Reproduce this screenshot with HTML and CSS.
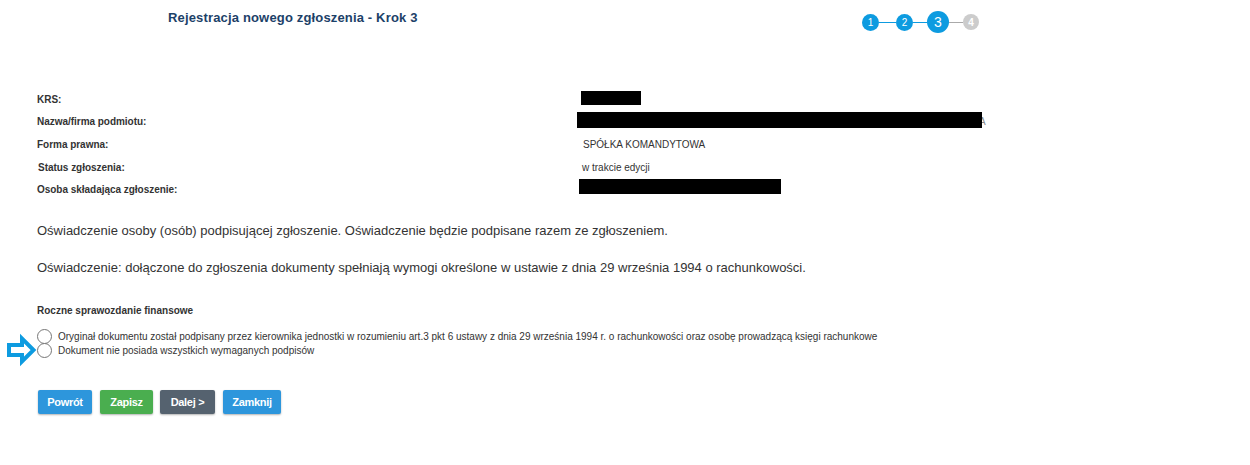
FILE: index.html
```html
<!DOCTYPE html>
<html lang="pl">
<head>
<meta charset="UTF-8"/>
<title>Rejestracja nowego zgłoszenia - Krok 3</title>
<link rel="stylesheet" href="styles.css">
</head>
<body>
<div class="header">
	<h1 class="title">Rejestracja nowego zgłoszenia - Krok 3</h1>
	<div class="steps">
		<span class="step">1</span>
		<span class="line"></span>
		<span class="step">2</span>
		<span class="line"></span>
		<span class="step current">3</span>
		<span class="line off"></span>
		<span class="step todo">4</span>
	</div>
</div>

<div class="info">
	<div class="row row-krs">
		<div class="label">KRS:</div>
		<div class="value"><span class="mask mask-krs"></span></div>
	</div>
	<div class="row row-name">
		<div class="label">Nazwa/firma podmiotu:</div>
		<div class="value value-name">A<span class="mask mask-name"></span></div>
	</div>
	<div class="row row-form">
		<div class="label">Forma prawna:</div>
		<div class="value value-form">SPÓŁKA KOMANDYTOWA</div>
	</div>
	<div class="row row-status">
		<div class="label label-status">Status zgłoszenia:</div>
		<div class="value value-status">w trakcie edycji</div>
	</div>
	<div class="row row-person">
		<div class="label">Osoba składająca zgłoszenie:</div>
		<div class="value"><span class="mask mask-person"></span></div>
	</div>
</div>

<div class="statement">
	<p>Oświadczenie osoby (osób) podpisującej zgłoszenie. Oświadczenie będzie podpisane razem ze zgłoszeniem.</p>
	<p>Oświadczenie: dołączone do zgłoszenia dokumenty spełniają wymogi określone w ustawie z dnia 29 września 1994 o rachunkowości.</p>
</div>

<div class="report">
	<div class="report-title">Roczne sprawozdanie finansowe</div>
	<div class="options">
		<label class="option"><span class="radio"></span>Oryginał dokumentu został podpisany przez kierownika jednostki w rozumieniu art.3 pkt 6 ustawy z dnia 29 września 1994 r. o rachunkowości oraz osobę prowadzącą księgi rachunkowe</label>
		<label class="option"><span class="radio"></span>Dokument nie posiada wszystkich wymaganych podpisów</label>
		<svg class="arrow" width="34" height="34" viewBox="0 0 34 34">
			<path d="M4 12H17V5.5L28.5 17L17 28.5V22H4Z" fill="#fff" stroke="#0d9be0" stroke-width="4"/>
		</svg>
	</div>
</div>

<div class="buttons">
	<a class="btn btn-blue btn-back">Powrót</a>
	<a class="btn btn-green btn-save">Zapisz</a>
	<a class="btn btn-dark btn-next">Dalej &gt;</a>
	<a class="btn btn-blue btn-close">Zamknij</a>
</div>
</body>
</html>
```

FILE: styles.css
```css
*{margin:0;padding:0;box-sizing:border-box;}
html,body{height:100%;overflow:hidden;}
body{background:#fff;color:#333;font-family:"Liberation Sans",Arial,sans-serif;font-size:10px;}

.header{display:flex;height:75px;padding:10px 0 0 168px;}
.title{width:694px;font-size:13px;line-height:16px;letter-spacing:.16px;font-weight:bold;color:#1c4168;}
.steps{display:flex;align-items:center;height:24px;}
.step{display:flex;align-items:center;justify-content:center;flex:none;width:17px;height:17px;border-radius:50%;background:#0d9be0;color:#fff;font-size:10px;}
.step.current{width:22px;height:22px;font-size:14px;}
.step.todo{width:16px;height:16px;background:#ccc;font-weight:bold;}
.line{width:17px;height:1px;background:#0d9be0;}
.line:nth-child(4){width:14px;}
.line.off{width:14px;background:#aaa;}

.info{padding-left:37px;}
.row{display:grid;grid-template-columns:544px 1fr;align-items:center;}
.row-krs{height:22px;margin-top:13px;}
.row-name{height:22px;}
.row-form{height:24px;}
.row-status{height:22px;}
.row-person{height:22px;}
.label{font-weight:bold;font-size:10px;color:#333;letter-spacing:-.03px;}
.label-status{padding-left:1px;}
.value{position:relative;font-size:10px;}
.value-form{padding-left:2px;}
.value-status{padding-left:1px;}
.value-name{padding-left:398px;color:#888;}
.mask{display:block;background:#000;}
.mask-krs{width:60px;height:14px;margin-bottom:2px;}
.mask-name{position:absolute;left:-4px;top:-4px;width:405px;height:16px;}
.mask-person{width:202px;height:15px;margin:0 0 6px -2px;}

.statement{padding:23px 0 0 37px;font-size:13px;line-height:16px;}
.statement p{margin-bottom:21px;}

.report{padding:7px 0 0 37px;}
.report-title{font-weight:bold;font-size:10px;line-height:14px;}
.options{position:relative;margin-top:11px;}
.option{display:flex;align-items:center;height:14px;font-size:10px;}
.radio{flex:none;width:15px;height:15px;margin-right:6px;border:1px solid #767676;border-radius:50%;background:#fff;}
.arrow{position:absolute;left:-32px;top:4px;}

.buttons{display:flex;gap:8px;padding:33px 0 0 38px;}
.btn{display:flex;align-items:center;justify-content:center;height:24px;border-radius:2px;color:#fff;font-size:11px;letter-spacing:-.3px;font-weight:bold;box-shadow:0 1px 2px rgba(0,0,0,.3);}
.btn-blue{background:#2d96dc;}
.btn-green{background:#4aae4f;}
.btn-dark{background:#55626f;}
.btn-back{width:54px;}
.btn-save{width:53px;}
.btn-next{width:55px;margin-left:-1px;}
.btn-close{width:58px;}
```
